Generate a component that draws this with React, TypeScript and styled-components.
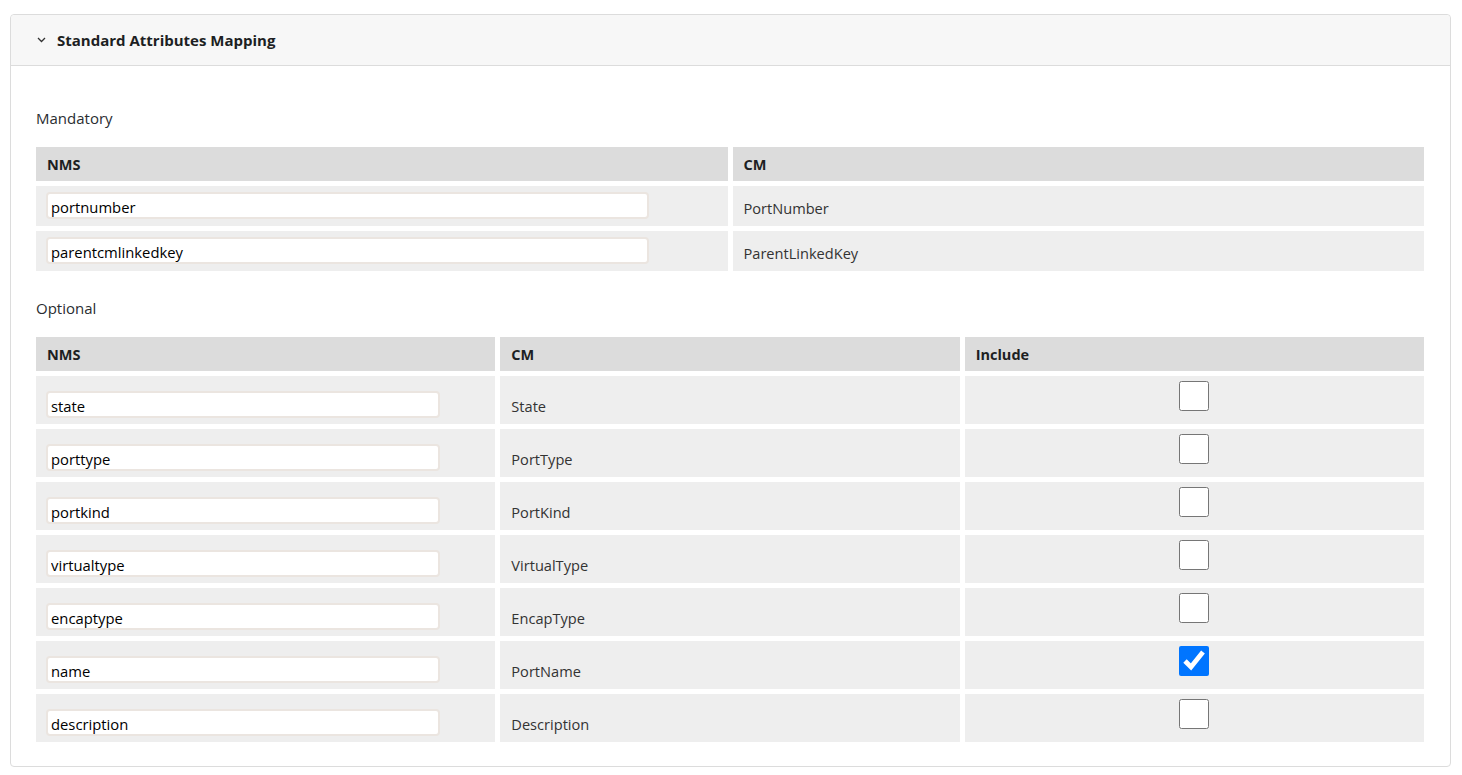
import styled, { createGlobalStyle } from "styled-components";
import { useState } from "react";

const GlobalStyle = createGlobalStyle`
  body {
    margin: 0;
    background: #ffffff;
    font-family: "Open Sans", "Noto Sans", Arial, sans-serif;
    color: #212529;
  }
`;

const Page = styled.div`
  padding: 14px 11px 8px 10px;
`;

const Card = styled.div`
  border: 1px solid #dcdcdc;
  border-radius: 4px;
  background: #ffffff;
`;

const CardHeader = styled.div`
  display: flex;
  align-items: center;
  gap: 11px;
  height: 50px;
  padding: 0 26px;
  background: #f7f7f7;
  border-bottom: 1px solid #dcdcdc;
  border-radius: 4px 4px 0 0;
`;

const Title = styled.div`
  font-size: 15px;
  font-weight: 700;
  color: #1d1f23;
`;

const CardBody = styled.div`
  padding: 15px 26px 24px 25px;
`;

const SectionLabel = styled.div`
  font-size: 15px;
  line-height: 20px;
  color: #2a2d31;
  margin: 27px 0 19px;
`;

const Grid = styled.div<{ $cols: number }>`
  display: grid;
  grid-template-columns: repeat(${({ $cols }) => $cols}, 1fr);
  gap: 5px;
`;

const HeadCell = styled.div`
  height: 34px;
  display: flex;
  align-items: center;
  padding: 0 10px 0 11px;
  background: #dcdcdc;
  font-size: 14.5px;
  font-weight: 700;
  color: #1d1f23;
`;

const Cell = styled.div<{ $h: number; $align: "end" | "start"; $center?: boolean; $pb?: number }>`
  height: ${({ $h }) => $h}px;
  box-sizing: border-box;
  display: flex;
  align-items: ${({ $align }) => ($align === "end" ? "flex-end" : "flex-start")};
  justify-content: ${({ $center }) => ($center ? "center" : "flex-start")};
  padding: ${({ $align, $pb }) => ($align === "end" ? `0 10px ${$pb ?? 6}px 11px` : "5px 10px 0")};
  background: #eeeeee;
  font-size: 14.6px;
  line-height: 20px;
  color: #333333;
`;

const TextInput = styled.input`
  width: 90%;
  height: 27px;
  margin-left: -1px;
  box-sizing: border-box;
  border: 2px solid #ebe5e0;
  border-radius: 4px;
  padding: 2px 3px 0;
  background: #ffffff;
  font-family: "Open Sans", "Noto Sans", Arial, sans-serif;
  font-size: 14.8px;
  color: #000000;
  outline: none;
`;

const Check = styled.input`
  width: 30px;
  height: 30px;
  margin: 0;
`;

const Chevron = () => (
  <svg width="9" height="6" viewBox="0 0 9 6">
    <polyline points="1,1 4.5,4.5 8,1" fill="none" stroke="#333" strokeWidth="1.3" />
  </svg>
);

const mandatory = [
  { nms: "portnumber", cm: "PortNumber" },
  { nms: "parentcmlinkedkey", cm: "ParentLinkedKey" },
];

const optional = [
  { nms: "state", cm: "State", on: false },
  { nms: "porttype", cm: "PortType", on: false },
  { nms: "portkind", cm: "PortKind", on: false },
  { nms: "virtualtype", cm: "VirtualType", on: false },
  { nms: "encaptype", cm: "EncapType", on: false },
  { nms: "name", cm: "PortName", on: true },
  { nms: "description", cm: "Description", on: false },
];

export default function App() {
  const [checks, setChecks] = useState(optional.map((o) => o.on));

  return (
    <Page>
      <GlobalStyle />
      <Card>
        <CardHeader>
          <Chevron />
          <Title>Standard Attributes Mapping</Title>
        </CardHeader>
        <CardBody>
          <SectionLabel>Mandatory</SectionLabel>
          <Grid $cols={2}>
            <HeadCell>NMS</HeadCell>
            <HeadCell>CM</HeadCell>
            {mandatory.map((row) => (
              <>
                <Cell key={row.nms} $h={40} $align="end" $pb={7}>
                  <TextInput defaultValue={row.nms} />
                </Cell>
                <Cell key={row.cm} $h={40} $align="end" $pb={8}>
                  {row.cm}
                </Cell>
              </>
            ))}
          </Grid>

          <SectionLabel>Optional</SectionLabel>
          <Grid $cols={3}>
            <HeadCell>NMS</HeadCell>
            <HeadCell>CM</HeadCell>
            <HeadCell>Include</HeadCell>
            {optional.map((row, i) => (
              <>
                <Cell key={row.nms} $h={48} $align="end" $pb={6}>
                  <TextInput defaultValue={row.nms} />
                </Cell>
                <Cell key={row.cm} $h={48} $align="end" $pb={8}>
                  {row.cm}
                </Cell>
                <Cell key={row.cm + "-inc"} $h={48} $align="start" $center>
                  <Check
                    type="checkbox"
                    checked={checks[i]}
                    onChange={() =>
                      setChecks((prev) => prev.map((v, j) => (j === i ? !v : v)))
                    }
                  />
                </Cell>
              </>
            ))}
          </Grid>
        </CardBody>
      </Card>
    </Page>
  );
}
